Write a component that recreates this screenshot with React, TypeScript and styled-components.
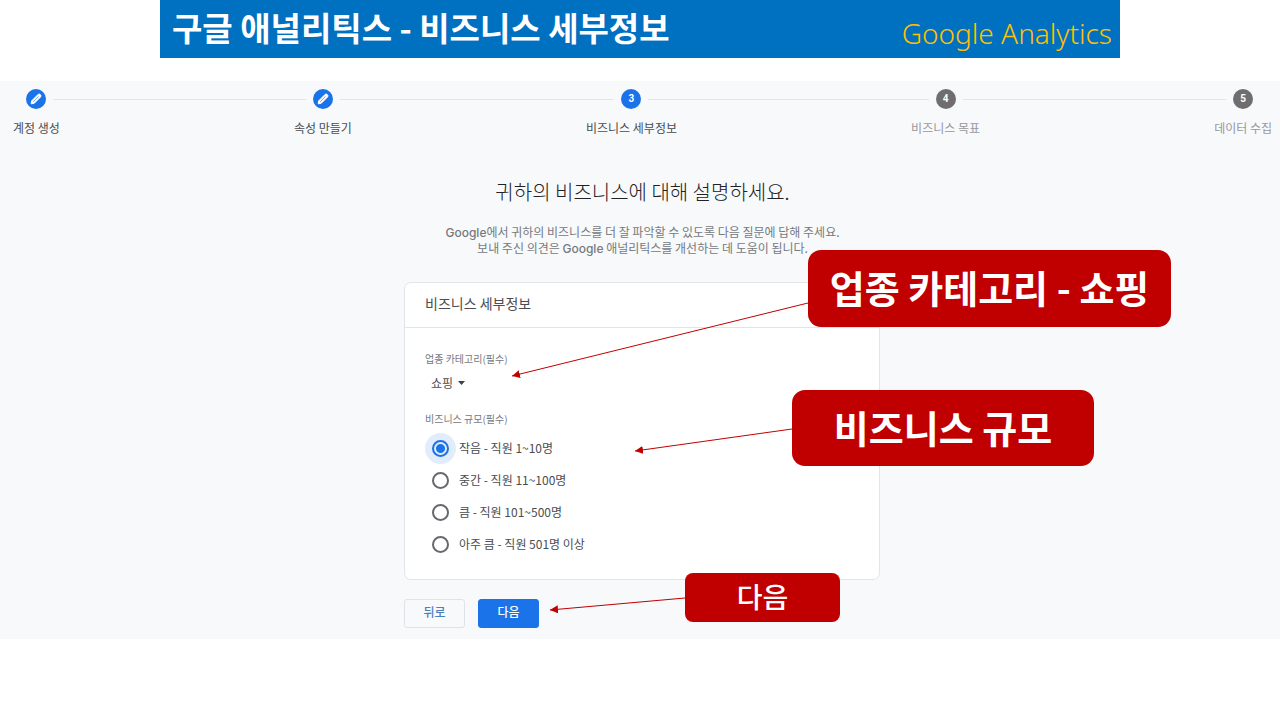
import React from "react";
import styled, { createGlobalStyle } from "styled-components";

const GlobalStyle = createGlobalStyle`
  *, *::before, *::after { box-sizing: border-box; }
  body {
    margin: 0;
    background: #fff;
    font-family: "Noto Sans CJK KR", sans-serif;
    font-size: 12px;
    line-height: 16px;
    color: #4a4d51;
  }
`;

const Banner = styled.header`
  display: flex;
  justify-content: space-between;
  align-items: flex-start;
  width: 75%;
  height: 58px;
  margin: 0 auto 23px;
  padding: 0 8px 0 12px;
  background: #0070c0;
`;

const BannerTitle = styled.h1`
  margin: 0;
  color: #fff;
  font-size: 33px;
  line-height: 54px;
  font-weight: 700;
  white-space: nowrap;
`;

const BannerBrand = styled.span`
  padding-top: 13px;
  color: #ffc000;
  font-family: "Noto Sans", "Open Sans", sans-serif;
  font-size: 28px;
  line-height: 40px;
  font-weight: 300;
  white-space: nowrap;
`;

const Panel = styled.main`
  overflow: hidden;
  padding-bottom: 11px;
  background: #f8f9fb;
`;

const Stepper = styled.ol`
  display: flex;
  margin: 0;
  padding: 8px 8px 0 13px;
  list-style: none;
`;

const StepItem = styled.li<{ $grow: boolean }>`
  display: flex;
  flex: ${(p) => (p.$grow ? "1 1 auto" : "0 0 auto")};
`;

const StepBody = styled.div`
  flex: none;
`;

const StepTop = styled.div`
  display: flex;
  align-items: center;
  gap: 7px;
  height: 20px;
`;

const Line = styled.span<{ $hidden?: boolean }>`
  flex: 1;
  height: 1px;
  background: ${(p) => (p.$hidden ? "transparent" : "#e2e4e7")};
`;

const Connector = styled(Line)`
  margin-top: 10px;
`;

const StepDot = styled.span<{ $active: boolean }>`
  display: flex;
  align-items: center;
  justify-content: center;
  width: 20px;
  height: 20px;
  border-radius: 50%;
  background: ${(p) => (p.$active ? "#1a73e8" : "#6e6e6e")};
  color: #fff;
  font-family: Roboto, sans-serif;
  font-size: 10px;
  font-weight: 700;
`;

const StepLabel = styled.div<{ $muted: boolean }>`
  margin-top: 11px;
  color: ${(p) => (p.$muted ? "#96989b" : "#4a4d51")};
  white-space: nowrap;
`;

const Intro = styled.section`
  margin: 42px 0 26px 5px;
  text-align: center;
`;

const Heading = styled.h2`
  margin: 0 0 18px;
  color: #202124;
  font-size: 20px;
  line-height: 28px;
  font-weight: 300;
`;

const Description = styled.p`
  margin: 0;
  color: #75797e;
`;

const Latin = styled.span`
  font-family: Inter, sans-serif;
  line-height: 1;
  font-weight: 500;
`;

const Form = styled.form`
  position: relative;
  left: 2px;
  width: 476px;
  max-width: 100%;
  margin: 0 auto;
`;

const Card = styled.div`
  border: 1px solid #e2e4e9;
  border-radius: 7px;
  background: #fff;
`;

const CardTitle = styled.h3`
  margin: 0;
  padding: 8px 20px 12px;
  border-bottom: 1px solid #e2e4e9;
  font-size: 14px;
  line-height: 24px;
  font-weight: 400;
`;

const CardBody = styled.div`
  padding: 23px 20px 19px;
`;

const FieldLabel = styled.label`
  display: block;
  color: #75797e;
  font-size: 10px;
`;

const SelectBox = styled.div`
  display: flex;
  align-items: center;
  gap: 4px;
  height: 32px;
  padding-left: 6px;
  margin-bottom: 12px;
`;

const Select = styled.select`
  appearance: none;
  margin: 0;
  padding: 0;
  border: 0;
  background: none;
  color: inherit;
  font: inherit;
`;

const Group = styled.fieldset`
  margin: 0;
  padding: 0;
  border: 0;
`;

const Legend = styled.legend`
  margin-bottom: 5px;
  padding: 0;
  color: #75797e;
  font-size: 10px;
`;

const Option = styled.label`
  display: flex;
  align-items: center;
  gap: 10px;
  height: 32px;
  padding-left: 7px;
`;

const Radio = styled.input`
  appearance: none;
  width: 17px;
  height: 17px;
  margin: 0;
  border: 2px solid #66696e;
  border-radius: 50%;

  &:checked {
    border-color: #1a73e8;
    background: #e1edfc radial-gradient(circle, #1a73e8 4px, transparent 5px);
    box-shadow: 0 0 0 7px #e1edfc;
  }
`;

const Actions = styled.div`
  display: flex;
  gap: 13px;
  margin-top: 19px;
`;

const Button = styled.button<{ $primary?: boolean }>`
  width: 61px;
  height: 29px;
  padding: 0 0 3px;
  border: 1px solid ${(p) => (p.$primary ? "#1a73e8" : "#dfe2e6")};
  border-radius: 3px;
  background: ${(p) => (p.$primary ? "#1a73e8" : "transparent")};
  color: ${(p) => (p.$primary ? "#fff" : "#4a7fbe")};
  font: inherit;
  font-weight: 500;
`;

const Arrows = styled.svg`
  position: absolute;
  top: 0;
  left: 0;
  overflow: visible;
  pointer-events: none;
`;

const Callout = styled.div<{ $x: number; $y: number; $w: number; $h: number; $small?: boolean }>`
  position: absolute;
  left: ${(p) => p.$x}px;
  top: ${(p) => p.$y}px;
  width: ${(p) => p.$w}px;
  height: ${(p) => p.$h}px;
  display: flex;
  align-items: center;
  justify-content: center;
  padding-bottom: 3px;
  border-radius: ${(p) => (p.$small ? 8 : 13)}px;
  background: #c00000;
  color: #fff;
  font-size: ${(p) => (p.$small ? 28 : 38)}px;
  line-height: 48px;
  font-weight: ${(p) => (p.$small ? 500 : 700)};
  white-space: nowrap;
`;

const steps = ["계정 생성", "속성 만들기", "비즈니스 세부정보", "비즈니스 목표", "데이터 수집"];
const sizes = ["작음 - 직원 1~10명", "중간 - 직원 11~100명", "큼 - 직원 101~500명", "아주 큼 - 직원 501명 이상"];

const Pencil = () => (
  <svg width="20" height="20" viewBox="0 0 20 20" aria-hidden="true">
    <path d="M5.2 14.8L5.6 11.9L12.1 5.4Q13.2 4.5 14.3 5.6Q15.5 6.8 14.6 7.9L8.1 14.4Z" fill="#fff" stroke="#fff" strokeWidth="1" strokeLinejoin="round" />
    <path d="M7 13L12.6 7.4" stroke="#7fb0f2" strokeWidth="1" />
  </svg>
);

export default function App() {
  return (
    <>
      <GlobalStyle />
      <Banner>
        <BannerTitle>구글 애널리틱스 - 비즈니스 세부정보</BannerTitle>
        <BannerBrand>Google Analytics</BannerBrand>
      </Banner>
      <Panel>
        <Stepper>
          {steps.map((label, i) => {
            const last = i === steps.length - 1;
            return (
              <StepItem key={label} $grow={!last}>
                <StepBody>
                  <StepTop>
                    <Line $hidden={i === 0} />
                    <StepDot $active={i < 3}>{i < 2 ? <Pencil /> : i + 1}</StepDot>
                    <Line $hidden={last} />
                  </StepTop>
                  <StepLabel $muted={i > 2}>{label}</StepLabel>
                </StepBody>
                {!last && <Connector />}
              </StepItem>
            );
          })}
        </Stepper>
        <Intro>
          <Heading>귀하의 비즈니스에 대해 설명하세요.</Heading>
          <Description>
            <Latin>Google</Latin>에서 귀하의 비즈니스를 더 잘 파악할 수 있도록 다음 질문에 답해 주세요.
            <br />
            보내 주신 의견은 <Latin>Google</Latin> 애널리틱스를 개선하는 데 도움이 됩니다.
          </Description>
        </Intro>
        <Form onSubmit={(e) => e.preventDefault()}>
          <Card>
            <CardTitle>비즈니스 세부정보</CardTitle>
            <CardBody>
              <FieldLabel htmlFor="industry">업종 카테고리(필수)</FieldLabel>
              <SelectBox>
                <Select id="industry" defaultValue="shopping">
                  <option value="shopping">쇼핑</option>
                </Select>
                <svg width="7" height="4" viewBox="0 0 7 4" aria-hidden="true">
                  <path d="M0 0h7L3.5 4z" fill="#3c4043" />
                </svg>
              </SelectBox>
              <Group>
                <Legend>비즈니스 규모(필수)</Legend>
                {sizes.map((size, i) => (
                  <Option key={size}>
                    <Radio type="radio" name="size" defaultChecked={i === 0} />
                    {size}
                  </Option>
                ))}
              </Group>
            </CardBody>
          </Card>
          <Actions>
            <Button type="button">뒤로</Button>
            <Button type="submit" $primary>다음</Button>
          </Actions>
          <Arrows width="476" height="346" aria-hidden="true">
            <defs>
              <marker id="head" markerUnits="userSpaceOnUse" markerWidth="9" markerHeight="8" refX="8" refY="4" orient="auto">
                <path d="M0 0L8 4L0 8z" fill="#c00000" />
              </marker>
            </defs>
            <g stroke="#c00000" strokeWidth="1">
              <line x1="404" y1="21" x2="108" y2="94" markerEnd="url(#head)" />
              <line x1="388" y1="147" x2="231" y2="169" markerEnd="url(#head)" />
              <line x1="281" y1="316" x2="146" y2="328" markerEnd="url(#head)" />
            </g>
          </Arrows>
          <Callout $x={404} $y={-32} $w={363} $h={77}>업종 카테고리 - 쇼핑</Callout>
          <Callout $x={388} $y={108} $w={302} $h={76}>비즈니스 규모</Callout>
          <Callout $x={281} $y={291} $w={155} $h={49} $small>다음</Callout>
        </Form>
      </Panel>
    </>
  );
}
